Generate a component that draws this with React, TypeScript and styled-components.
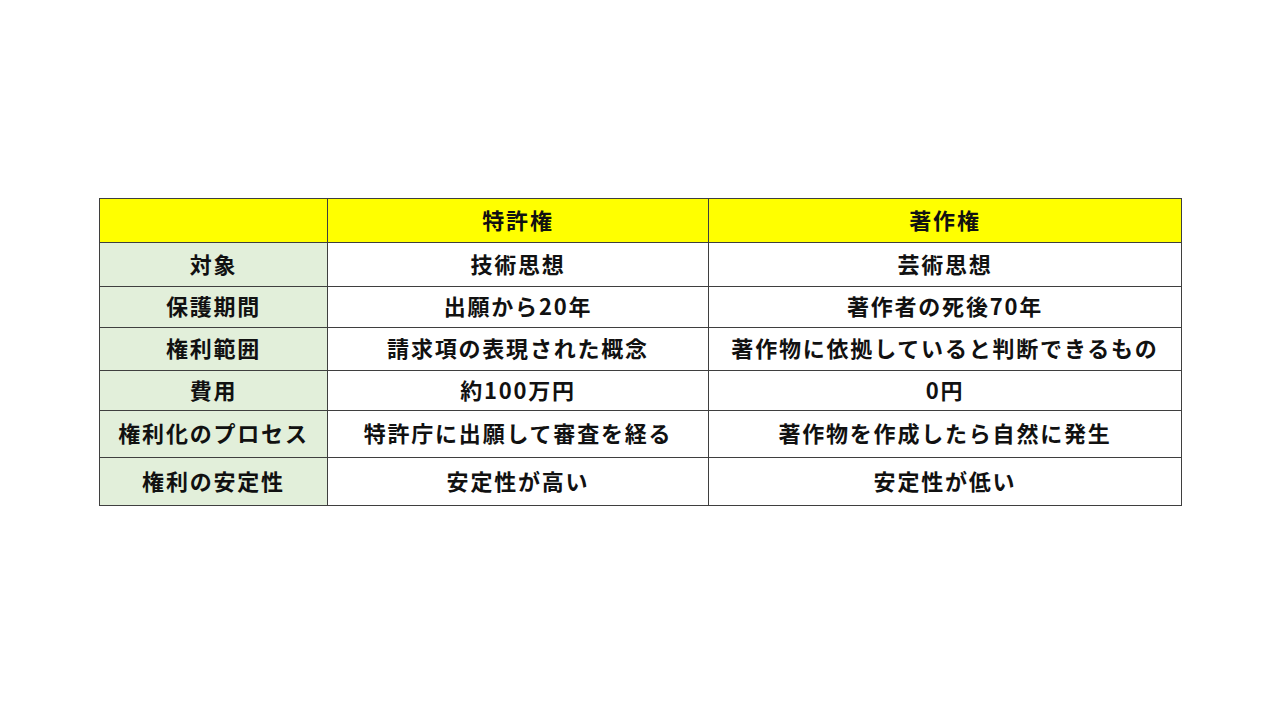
import React from "react";
import styled, { createGlobalStyle } from "styled-components";

const GlobalStyle = createGlobalStyle`
  html, body {
    margin: 0;
    padding: 0;
    background: #ffffff;
  }
  body {
    font-family: "Noto Sans CJK JP", "Noto Sans", sans-serif;
  }
`;

const Page = styled.div`
  width: 1280px;
  height: 720px;
  padding: 198px 0 0 99px;
  box-sizing: border-box;
  display: flex;
  align-items: flex-start;
`;

const Table = styled.table`
  border-collapse: collapse;
  width: 1082px;
  table-layout: fixed;
  color: #111111;
  font-size: 22px;
  font-weight: 700;
`;

const Cell = styled.td<{ $bg?: string; $h: number }>`
  border: 1px solid #3f3f3f;
  background: ${(p) => p.$bg || "#ffffff"};
  height: ${(p) => p.$h - 5}px;
  padding: 0 0 4px 0;
  text-align: center;
  vertical-align: middle;
  line-height: 1;
  letter-spacing: 1.8px;
  white-space: nowrap;
`;

const rows: [string, string, string, number][] = [
  ["対象", "技術思想", "芸術思想", 44],
  ["保護期間", "出願から20年", "著作者の死後70年", 41],
  ["権利範囲", "請求項の表現された概念", "著作物に依拠していると判断できるもの", 43],
  ["費用", "約100万円", "0円", 40],
  ["権利化のプロセス", "特許庁に出願して審査を経る", "著作物を作成したら自然に発生", 47],
  ["権利の安定性", "安定性が高い", "安定性が低い", 48],
];

const App = () => {
  return (
    <>
      <GlobalStyle />
      <Page>
        <Table>
          <colgroup>
            <col style={{ width: 228 }} />
            <col style={{ width: 381 }} />
            <col style={{ width: 473 }} />
          </colgroup>
          <tbody>
            <tr>
              <Cell $bg="#ffff00" $h={44}></Cell>
              <Cell $bg="#ffff00" $h={44}>特許権</Cell>
              <Cell $bg="#ffff00" $h={44}>著作権</Cell>
            </tr>
            {rows.map(([label, patent, copyright, h]) => (
              <tr key={label}>
                <Cell $bg="#e2efda" $h={h}>{label}</Cell>
                <Cell $h={h}>{patent}</Cell>
                <Cell $h={h}>{copyright}</Cell>
              </tr>
            ))}
          </tbody>
        </Table>
      </Page>
    </>
  );
};

export default App;
